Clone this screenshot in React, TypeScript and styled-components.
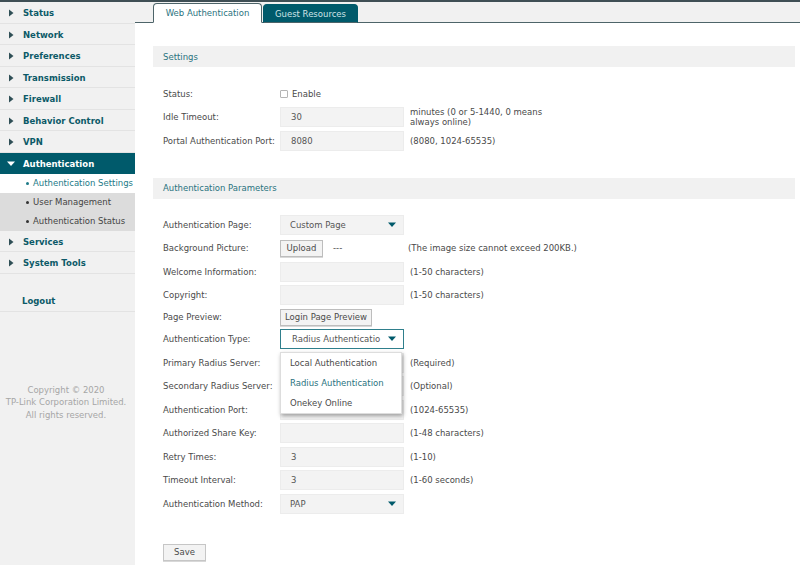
import styled, { createGlobalStyle } from 'styled-components';

const GlobalStyle = createGlobalStyle`
  html, body {
    margin: 0;
    padding: 0;
    background: #fff;
    height: 100%;
    overflow: hidden;
  }
  * {
    box-sizing: border-box;
  }
  body {
    font-family: "DejaVu Sans", Verdana, sans-serif;
    font-size: 8.5px;
    color: #4a4a4a;
  }
`;

const menuTop = ['Status', 'Network', 'Preferences', 'Transmission', 'Firewall', 'Behavior Control', 'VPN'];
const subMenu = ['Authentication Settings', 'User Management', 'Authentication Status'];
const menuBottom = ['Services', 'System Tools'];
const typeOptions = ['Local Authentication', 'Radius Authentication', 'Onekey Online'];

function CaretRight() {
  return (
    <CaretSvg width="6" height="8" viewBox="0 0 6 8">
      <path d="M1 0.5 L5.5 4 L1 7.5 Z" fill="#2f4f56" />
    </CaretSvg>
  );
}

function CaretDown({ color = '#fff' }: { color?: string }) {
  return (
    <svg width="8" height="6" viewBox="0 0 8 6">
      <path d="M0 0.5 H8 L4 5 Z" fill={color} />
    </svg>
  );
}

export default function App() {
  return (
    <>
      <GlobalStyle />
      <Page>
        <Sidebar>
          {menuTop.map((item) => (
            <MenuItem key={item}>
              <CaretRight />
              {item}
            </MenuItem>
          ))}
          <ActiveItem>
            <CaretDown />
            Authentication
          </ActiveItem>
          <SubItem $active>{subMenu[0]}</SubItem>
          <SubItem>{subMenu[1]}</SubItem>
          <SubItem>{subMenu[2]}</SubItem>
          {menuBottom.map((item) => (
            <MenuItem key={item}>
              <CaretRight />
              {item}
            </MenuItem>
          ))}
          <Logout>Logout</Logout>
          <Copyright>
            Copyright © 2020
            <br />
            TP-Link Corporation Limited.
            <br />
            All rights reserved.
          </Copyright>
        </Sidebar>
        <Main>
          <Tabs>
            <Tab $active>Web Authentication</Tab>
            <Tab>Guest Resources</Tab>
          </Tabs>
          <Content>
            <SectionHeader>Settings</SectionHeader>
            <Rows $top={15}>
              <Row>
                <Label>Status:</Label>
                <CheckLabel>
                  <CheckBox />
                  Enable
                </CheckLabel>
              </Row>
              <Row>
                <Label>Idle Timeout:</Label>
                <Field>30</Field>
                <Hint $wrap>minutes (0 or 5-1440, 0 means always online)</Hint>
              </Row>
              <Row>
                <Label>Portal Authentication Port:</Label>
                <Field>8080</Field>
                <Hint>(8080, 1024-65535)</Hint>
              </Row>
            </Rows>
            <SectionHeader $top={25}>Authentication Parameters</SectionHeader>
            <Rows $top={14.5}>
              <Row>
                <Label>Authentication Page:</Label>
                <SelectBox>
                  Custom Page
                  <CaretDown color="#005a6b" />
                </SelectBox>
              </Row>
              <Row>
                <Label>Background Picture:</Label>
                <Upload>Upload</Upload>
                <Dashes>---</Dashes>
                <WideHint>(The image size cannot exceed 200KB.)</WideHint>
              </Row>
              <Row>
                <Label>Welcome Information:</Label>
                <Field />
                <Hint>(1-50 characters)</Hint>
              </Row>
              <Row>
                <Label>Copyright:</Label>
                <Field />
                <Hint>(1-50 characters)</Hint>
              </Row>
              <Row $height={20.5}>
                <Label>Page Preview:</Label>
                <Upload>Login Page Preview</Upload>
              </Row>
              <Row>
                <Label>Authentication Type:</Label>
                <SelectBox $open>
                  Radius Authenticatio
                  <CaretDown color="#005a6b" />
                </SelectBox>
                <Dropdown>
                  {typeOptions.map((opt) => (
                    <Option key={opt} $active={opt === 'Radius Authentication'}>
                      {opt}
                    </Option>
                  ))}
                </Dropdown>
              </Row>
              <Row>
                <Label>Primary Radius Server:</Label>
                <Field />
                <Hint>(Required)</Hint>
              </Row>
              <Row>
                <Label>Secondary Radius Server:</Label>
                <Field />
                <Hint>(Optional)</Hint>
              </Row>
              <Row>
                <Label>Authentication Port:</Label>
                <Field />
                <Hint>(1024-65535)</Hint>
              </Row>
              <Row>
                <Label>Authorized Share Key:</Label>
                <Field />
                <Hint>(1-48 characters)</Hint>
              </Row>
              <Row>
                <Label>Retry Times:</Label>
                <Field>3</Field>
                <Hint>(1-10)</Hint>
              </Row>
              <Row>
                <Label>Timeout Interval:</Label>
                <Field>3</Field>
                <Hint>(1-60 seconds)</Hint>
              </Row>
              <Row>
                <Label>Authentication Method:</Label>
                <SelectBox>
                  PAP
                  <CaretDown color="#005a6b" />
                </SelectBox>
              </Row>
            </Rows>
            <SaveButton>Save</SaveButton>
          </Content>
        </Main>
      </Page>
    </>
  );
}

const Page = styled.div`
  display: flex;
  width: 800px;
  height: 565px;
  overflow: hidden;
  border-top: 2px solid #3f4f55;
`;

const Sidebar = styled.aside`
  width: 135px;
  flex-shrink: 0;
  background: #f1f1f1;
  display: flex;
  flex-direction: column;
`;

const CaretSvg = styled.svg`
  flex-shrink: 0;
`;

const MenuItem = styled.div`
  height: 21.5px;
  display: flex;
  align-items: center;
  gap: 9px;
  padding: 2px 0 0 8px;
  font-weight: 700;
  font-size: 8.5px;
  color: #0c5a68;
  border-bottom: 1px solid #e3e3e3;
`;

const ActiveItem = styled(MenuItem)`
  height: 21px;
  gap: 8px;
  padding-left: 7px;
  background: #005a6b;
  color: #fff;
  border-bottom: none;
`;

const SubItem = styled.div<{ $active?: boolean }>`
  height: 19px;
  display: flex;
  align-items: center;
  padding-left: 33px;
  position: relative;
  font-size: 8.5px;
  color: ${({ $active }) => ($active ? '#1d7a88' : '#444')};
  background: ${({ $active }) => ($active ? '#fff' : '#dcdcdc')};

  &::before {
    content: '';
    position: absolute;
    left: 26px;
    top: 8px;
    width: 3px;
    height: 3px;
    border-radius: 50%;
    background: ${({ $active }) => ($active ? '#1d7a88' : '#333')};
  }
`;

const Logout = styled.div`
  height: 21px;
  margin-top: 17px;
  display: flex;
  align-items: center;
  padding-left: 22px;
  font-weight: 700;
  font-size: 8.5px;
  color: #0c5a68;
  border-bottom: 1px solid #e3e3e3;
`;

const Copyright = styled.div`
  margin-top: 72px;
  padding-right: 3px;
  text-align: center;
  font-size: 8.5px;
  line-height: 12.5px;
  color: #a6a6a6;
`;

const Main = styled.main`
  flex: 1;
  min-width: 0;
  display: flex;
  flex-direction: column;
`;

const Tabs = styled.div`
  height: 21px;
  flex-shrink: 0;
  display: flex;
  align-items: flex-end;
  gap: 1px;
  padding-left: 18px;
  background: #f1f1f1;
  border-bottom: 1px solid #4d6469;
`;

const Tab = styled.div<{ $active?: boolean }>`
  height: ${({ $active }) => ($active ? '20px' : '19px')};
  margin-bottom: -1px;
  display: flex;
  align-items: center;
  justify-content: center;
  width: ${({ $active }) => ($active ? '109px' : '95px')};
  font-size: 8.5px;
  border-radius: 4px 4px 0 0;
  color: ${({ $active }) => ($active ? '#2a7380' : '#cfe3e6')};
  background: ${({ $active }) => ($active ? '#fff' : '#005a6b')};
  border: 1px solid ${({ $active }) => ($active ? '#4d6469' : '#005a6b')};
  border-bottom-color: ${({ $active }) => ($active ? '#fff' : '#4d6469')};
`;

const Content = styled.div`
  padding: 23px 5px 0 18px;
  position: relative;
`;

const SectionHeader = styled.div<{ $top?: number }>`
  height: 21px;
  margin-top: ${({ $top }) => $top ?? 0}px;
  padding: 0 0 0 10px;
  display: flex;
  align-items: center;
  background: #f1f1f1;
  color: #2a7380;
  font-size: 8.5px;
`;

const Rows = styled.div<{ $top: number }>`
  margin-top: ${({ $top }) => $top}px;
  padding-left: 10px;
`;

const Row = styled.div<{ $height?: number }>`
  height: ${({ $height }) => $height ?? 23.5}px;
  display: flex;
  align-items: center;
  position: relative;
`;

const Label = styled.div`
  width: 117px;
  flex-shrink: 0;
  white-space: nowrap;
  color: #4a4a4a;
`;

const Field = styled.div`
  width: 124px;
  height: 20px;
  flex-shrink: 0;
  display: flex;
  align-items: center;
  padding-left: 10px;
  background: #f3f3f3;
  border: 1px solid #ececec;
  color: #555;
`;

const SelectBox = styled.div<{ $open?: boolean }>`
  width: 124px;
  height: 20px;
  flex-shrink: 0;
  display: flex;
  align-items: center;
  justify-content: space-between;
  padding: 0 7px 0 ${({ $open }) => ($open ? '11px' : '9px')};
  background: ${({ $open }) => ($open ? '#fff' : '#f3f3f3')};
  border: 1px solid ${({ $open }) => ($open ? '#2f7f8c' : '#ececec')};
  color: #555;
`;

const Hint = styled.div<{ $wrap?: boolean }>`
  margin-left: 6px;
  width: ${({ $wrap }) => ($wrap ? '150px' : 'auto')};
  line-height: 10px;
  color: #4a4a4a;
`;

const WideHint = styled.div`
  margin-left: 85px;
  color: #4a4a4a;
  white-space: nowrap;
`;

const Dashes = styled.span`
  margin-left: 10px;
  position: absolute;
  left: 160px;
`;

const Upload = styled.button`
  height: 17px;
  padding: 0 4px;
  min-width: 43px;
  font: inherit;
  color: #4a4a4a;
  background: #f3f3f3;
  border: 1px solid #bdbdbd;
  box-shadow: 0 1px 0 #d8d8d8;
`;

const CheckLabel = styled.label`
  display: flex;
  align-items: center;
  gap: 4px;
`;

const CheckBox = styled.span`
  width: 8px;
  height: 8px;
  border: 1px solid #b5b5b5;
  border-radius: 1px;
  background: #fff;
`;

const Dropdown = styled.div`
  position: absolute;
  left: 117px;
  top: 24px;
  width: 122px;
  height: 62px;
  padding: 0;
  background: #fff;
  border: 1px solid #ddd;
  box-shadow: 1px 2px 4px rgba(0, 0, 0, 0.35);
  z-index: 2;
`;

const Option = styled.div<{ $active?: boolean }>`
  height: 20px;
  display: flex;
  align-items: center;
  padding-left: 9px;
  color: ${({ $active }) => ($active ? '#2a7380' : '#4a4a4a')};
`;

const SaveButton = styled.button`
  display: block;
  margin: 28px 0 0 10px;
  width: 43px;
  height: 17px;
  font: inherit;
  color: #4a4a4a;
  background: #f3f3f3;
  border: 1px solid #c6c6c6;
  box-shadow: 0 1px 0 #d8d8d8;
`;
